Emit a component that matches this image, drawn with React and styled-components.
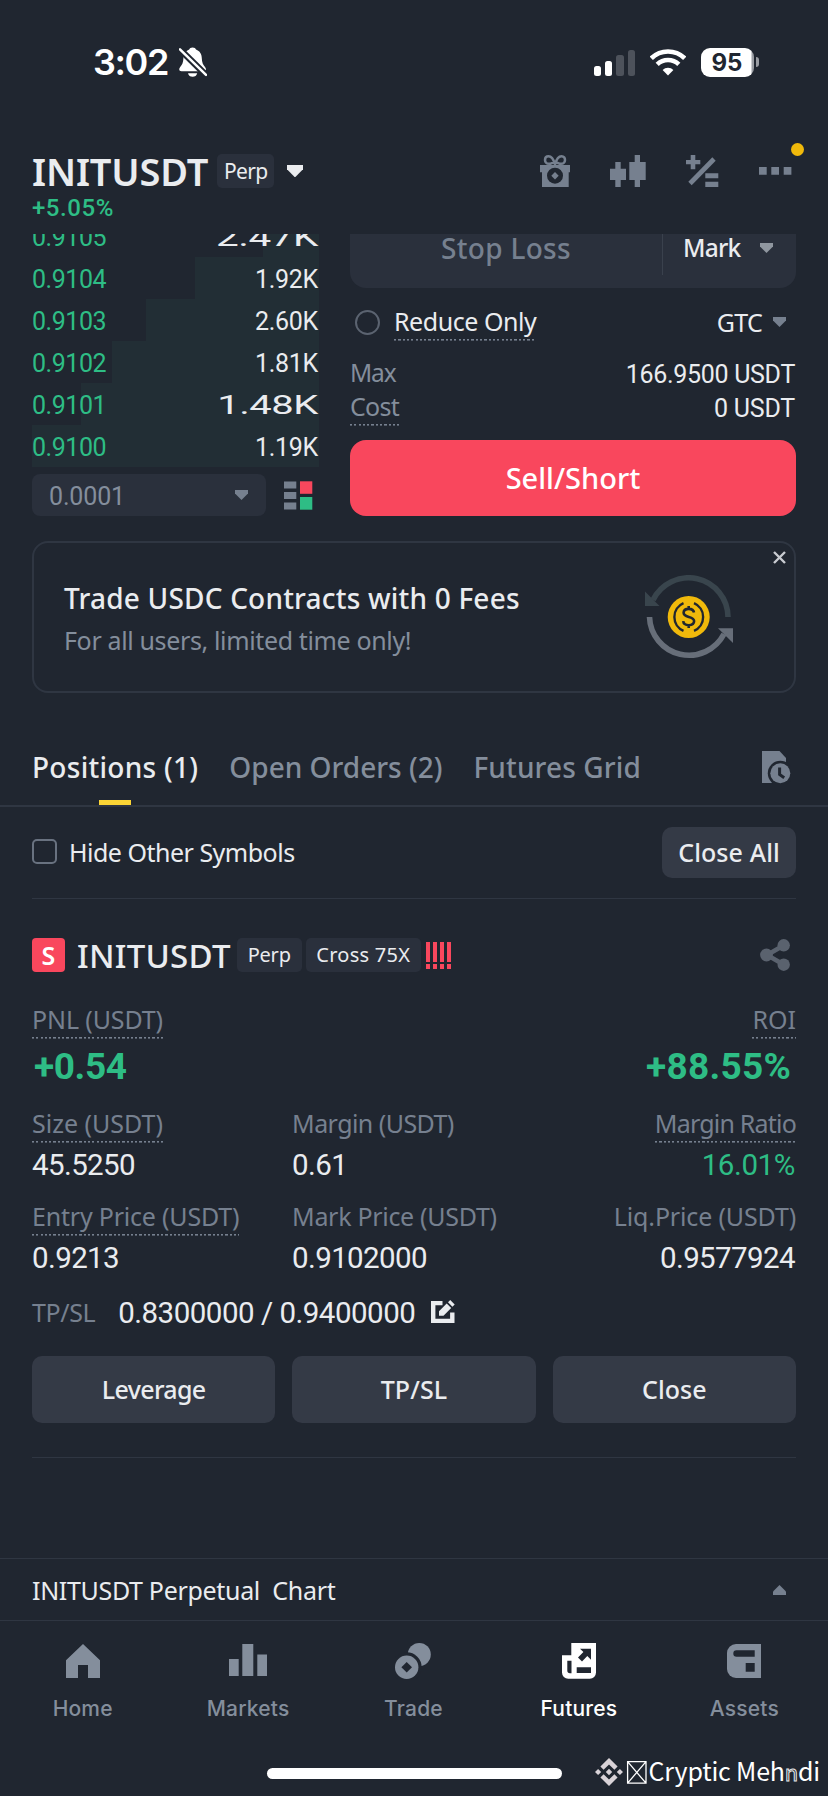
import styled, { createGlobalStyle, css } from 'styled-components';

const colors = {
  bg: '#202630',
  field: '#2a303c',
  button: '#343a46',
  line: '#2f3642',
  text: '#eaecef',
  muted: '#848e9c',
  dim: '#76808f',
  green: '#2ebd85',
  red: '#f9475d',
  yellow: '#fcd535',
  gold: '#f0b90b',
};

const sans = `'Noto Sans', 'Liberation Sans', sans-serif`;
const digits = `Roboto, 'Liberation Sans', sans-serif`;
const system = `Inter, 'Liberation Sans', sans-serif`;

const GlobalStyle = createGlobalStyle`
  * { box-sizing: border-box; }
  body {
    margin: 0;
    background: ${colors.bg};
    color: ${colors.text};
    font-family: ${sans};
  }
  svg { display: block; flex-shrink: 0; }
`;

const Screen = styled.div`
  position: relative;
  width: 828px;
  height: 1796px;
  display: flex;
  flex-direction: column;
  overflow: hidden;
`;

const Text = styled.span`
  font-family: ${(p) => p.$font || sans};
  font-size: ${(p) => p.$size || 25}px;
  font-weight: ${(p) => p.$weight || 400};
  letter-spacing: ${(p) => p.$ls || 0}px;
  color: ${(p) => p.$color || colors.text};
  line-height: ${(p) => p.$lh || 34}px;
  white-space: pre;
`;

const Num = styled(Text).attrs((p) => ({ $font: p.$font || digits }))`
  ${(p) => p.$stretch && css`
    display: inline-block;
    transform: scaleX(${p.$stretch});
    transform-origin: right center;
  `}
`;

/* Roboto sits a touch high next to the labels */
const RowNum = styled(Num)`
  padding-top: 3px;
`;

const Label = styled(Text)`
  line-height: 35px;
  padding-bottom: 2px;
`;

/* Label with a dotted hint line underneath */
const Hint = styled(Label)`
  background: repeating-linear-gradient(90deg, ${colors.dim} 0 2.2px, transparent 2.2px 4.3px) left bottom / 100% 1.6px no-repeat;
`;

/* ---------- status bar ---------- */

const StatusBar = styled.div`
  height: 124px;
  padding: 0 69px 0 93px;
  display: flex;
  align-items: center;
  justify-content: space-between;
`;

const StatusGroup = styled.div`
  display: flex;
  align-items: center;
  gap: ${(p) => p.$gap}px;
`;

const Signal = styled.div`
  display: flex;
  align-items: flex-end;
  gap: 4px;
  height: 27px;
`;

const SignalBar = styled.span`
  width: 7.3px;
  height: ${(p) => p.$h}px;
  border-radius: 2.5px;
  background: ${(p) => (p.$on ? '#fff' : '#4d525b')};
`;

const Battery = styled.div`
  display: flex;
  align-items: center;
  gap: 2px;
`;

const BatteryBody = styled.div`
  width: 53px;
  height: 29px;
  border-radius: 9px;
  background: linear-gradient(90deg, #fff 50px, #9a9da3 51px);
  text-align: center;
  padding-right: 1px;
`;

const BatteryTip = styled.div`
  width: 3px;
  height: 10px;
  border-radius: 0 5px 5px 0;
  background: #9a9da3;
`;

/* ---------- pair header ---------- */

const Header = styled.header`
  height: 110px;
  padding: 24px 36px 0 32px;
  display: flex;
  justify-content: space-between;
`;

const PairRow = styled.div`
  height: 46px;
  display: flex;
  align-items: center;
`;

const Change = styled(Num)`
  display: block;
  line-height: 29px;
`;

const Tag = styled.span`
  height: 34px;
  width: ${(p) => p.$w}px;
  margin-left: ${(p) => p.$ml || 0}px;
  border-radius: 5px;
  background: ${colors.field};
  display: flex;
  align-items: center;
  justify-content: center;
`;

const CaretSlot = styled.span`
  margin-left: ${(p) => p.$ml}px;
`;

const HeaderActions = styled.div`
  height: 46px;
  display: flex;
  align-items: center;
  gap: 40px;
`;

const MoreButton = styled.div`
  position: relative;
`;

const Dot = styled.span`
  position: absolute;
  top: -24px;
  right: -12px;
  width: 13px;
  height: 13px;
  border-radius: 50%;
  background: ${colors.gold};
`;

/* ---------- order book and form ---------- */

const Trade = styled.section`
  height: 307px;
  padding: 0 32px;
  display: flex;
  justify-content: space-between;
  overflow: hidden;
`;

const Book = styled.div`
  width: 287px;
`;

const Levels = styled.div`
  height: 233px;
  overflow: hidden;
  display: flex;
  flex-direction: column;
  justify-content: flex-end;
`;

const Level = styled.div`
  height: 42px;
  flex-shrink: 0;
  display: flex;
  align-items: center;
  justify-content: space-between;
  padding-right: 1px;
  background: linear-gradient(#222e35, #222e35) right / ${(p) => p.$depth}px 100% no-repeat;
`;

const BookFooter = styled.div`
  margin-top: 7px;
  display: flex;
  align-items: center;
`;

const StepSelect = styled.div`
  width: 234px;
  height: 42px;
  padding: 0 18px 0 17px;
  margin-right: 18px;
  border-radius: 8px;
  background: ${colors.field};
  display: flex;
  align-items: center;
  justify-content: space-between;
`;

const Form = styled.div`
  width: 446px;
`;

const StopField = styled.div`
  height: 80px;
  margin-top: -26px;
  border-radius: 16px;
  background: ${colors.field};
  display: flex;
  align-items: center;
`;

const StopInput = styled.div`
  width: 313px;
  height: 54px;
  padding-bottom: 1px;
  display: flex;
  align-items: center;
  justify-content: center;
  border-right: 1px solid #3a414d;
`;

const StopType = styled.div`
  flex: 1;
  padding: 0 23px 0 20px;
  display: flex;
  align-items: center;
  justify-content: space-between;
`;

const OptionRow = styled.div`
  height: 37px;
  margin: 16px 10px 0 5px;
  display: flex;
  align-items: center;
`;

const Radio = styled.span`
  width: 25px;
  height: 25px;
  margin: 0 14px 1px 0;
  border: 2px solid #5b6370;
  border-radius: 50%;
`;

const Tif = styled.div`
  margin-left: auto;
  padding-bottom: 2px;
  display: flex;
  align-items: center;
  gap: 11px;
`;

const AmountRow = styled.div`
  height: 34px;
  display: flex;
  align-items: center;
  justify-content: space-between;
  padding-right: 1px;
`;

const Amounts = styled.div`
  margin-top: 15px;
`;

const SellButton = styled.div`
  height: 76px;
  margin-top: 16px;
  border-radius: 16px;
  background: ${colors.red};
  display: flex;
  align-items: center;
  justify-content: center;
`;

/* ---------- banner ---------- */

const Banner = styled.section`
  position: relative;
  height: 152px;
  margin: 0 32px;
  padding: 0 61px 0 30px;
  border: 2px solid ${colors.line};
  border-radius: 16px;
  display: flex;
  align-items: center;
  justify-content: space-between;
`;

const BannerCopy = styled.div`
  display: flex;
  flex-direction: column;
  padding-top: 4px;
`;

const BannerClose = styled.span`
  position: absolute;
  top: 6px;
  right: 6px;
`;

/* ---------- tabs ---------- */

const Tabs = styled.nav`
  height: 69px;
  margin-top: 45px;
  padding: 0 37px 0 32px;
  border-bottom: 2px solid ${colors.line};
  display: flex;
  align-items: stretch;
  gap: 31px;
`;

const Tab = styled.div`
  display: flex;
  flex-direction: column;
  align-items: center;
  justify-content: space-between;
`;

const TabMark = styled.span`
  width: 32px;
  height: 5px;
  background: ${colors.yellow};
`;

const HistorySlot = styled.div`
  margin-left: auto;
  padding-top: 13px;
`;

/* ---------- positions ---------- */

const FilterRow = styled.div`
  height: 92px;
  margin: 0 32px;
  border-bottom: 1px solid ${colors.line};
  display: flex;
  align-items: center;
  justify-content: space-between;
`;

const HideOthers = styled.div`
  padding-bottom: 2px;
  display: flex;
  align-items: center;
`;

const Checkbox = styled.span`
  width: 25px;
  height: 25px;
  margin-right: 12px;
  border: 2px solid #697280;
  border-radius: 5px;
`;

const Button = styled.div`
  height: ${(p) => p.$h}px;
  width: ${(p) => p.$w}px;
  padding-bottom: 2px;
  border-radius: 10px;
  background: ${colors.button};
  display: flex;
  align-items: center;
  justify-content: center;
`;

const Position = styled.section`
  height: 559px;
  margin: 0 32px;
  padding-top: 39px;
  border-bottom: 1px solid ${colors.line};
`;

const PositionHead = styled.div`
  height: 34px;
  display: flex;
  align-items: center;
`;

const Side = styled.span`
  width: 33px;
  height: 34px;
  margin-right: 12px;
  border-radius: 4px;
  background: ${colors.red};
  display: flex;
  align-items: center;
  justify-content: center;
`;

const Symbol = styled(Text)`
  padding-top: 2px;
`;

const RiskBars = styled.div`
  display: flex;
  gap: 3px;
  margin-left: 5px;
`;

const RiskBar = styled.span`
  width: 4px;
  height: 27px;
  background: linear-gradient(${colors.red} 20px, transparent 20px 22px, ${colors.red} 22px);
`;

const ShareSlot = styled.span`
  margin-left: auto;
  margin-right: 6px;
`;

const Metrics = styled.div`
  display: grid;
  grid-template-columns: 260px 1fr auto;
  margin-top: ${(p) => p.$mt}px;
`;

const Metric = styled.div`
  display: flex;
  flex-direction: column;
  align-items: ${(p) => (p.$end ? 'flex-end' : 'flex-start')};
  gap: ${(p) => p.$gap || 7}px;
`;

const MetricNum = styled(Num)`
  padding-right: 1px;
`;

const Headline = styled(Num)`
  padding: 0 5px 0 2px;
  line-height: 38px;
`;

const TpSlRow = styled.div`
  height: 30px;
  margin-top: 24px;
  display: flex;
  align-items: center;
`;

const TpSlValue = styled(Num)`
  margin: 0 16px 0 23px;
  padding-top: 2px;
`;

const Actions = styled.div`
  margin-top: 29px;
  display: grid;
  grid-template-columns: repeat(3, 1fr);
  gap: 17px;
`;

/* ---------- bottom ---------- */

const ChartBar = styled.div`
  height: 63px;
  margin-top: 100px;
  padding: 0 42px 0 32px;
  border-top: 1px solid ${colors.line};
  border-bottom: 1px solid ${colors.line};
  display: flex;
  align-items: center;
  justify-content: space-between;
`;

const NavBar = styled.nav`
  height: 147px;
  padding: 22px 1px 0 0;
  display: grid;
  grid-template-columns: repeat(5, 1fr);
`;

const NavItem = styled.div`
  display: flex;
  flex-direction: column;
  align-items: center;
  gap: 17px;
`;

const HomeIndicator = styled.div`
  width: 295px;
  height: 11px;
  margin: 0 auto;
  border-radius: 6px;
  background: #fff;
`;

const Watermark = styled.div`
  position: absolute;
  right: 8px;
  bottom: 7px;
  height: 34px;
  display: flex;
  align-items: center;
`;

const MarkText = styled(Text)`
  margin-left: 2px;
  padding-bottom: 4px;
`;

const Ghost = styled.span`
  display: inline-block;
  font-size: 22px;
  color: ${colors.bg};
  -webkit-text-stroke: 1px #e6e7e9;
`;

/* ---------- icons ---------- */

const Caret = ({ w = 13, h = 10, color = colors.dim, up }) => (
  <svg width={w} height={h} viewBox="0 0 13 10" fill={color}>
    <path d={up ? 'M0 10V6.6L6.5 0 13 6.6V10z' : 'M0 0h13v3.4L6.5 10 0 3.4z'} />
  </svg>
);

const BellOff = () => (
  <svg width="28" height="30" viewBox="0 0 28 30">
    <path d="M13.6.4c-1.8 0-3 .9-3.4 2.1C6.3 4 4.5 7.2 4.400 11.2c-.1 4.3-1.3 6.5-3.2 8.7-1.6 1.9-1.3 4.300 1.3 4.300h22.200c2.600 0 2.900-2.400 1.300-4.300-1.900-2.200-3.100-4.400-3.200-8.700C22.700 7.200 20.900 4 17 2.500 16.600 1.300 15.400.4 13.600.4z" fill="#fff" />
    <path d="M9 26.200h9.200c-.5 2.300-2.300 3.600-4.600 3.600S9.500 28.500 9 26.200z" fill="#fff" />
    <path d="M-1 .5L28 29" stroke={colors.bg} strokeWidth="6.500" />
    <path d="M1 2.300L27 27.800" stroke="#fff" strokeWidth="2.500" strokeLinecap="round" />
  </svg>
);

const Wifi = () => (
  <svg width="36" height="27" viewBox="0 0 36 27" fill="none" stroke="#fff">
    <path d="M1.300 9.300a24 24 0 0 1 33.400 0" strokeWidth="4.600" />
    <path d="M7.200 15.300a15.600 15.600 0 0 1 21.600 0" strokeWidth="4.600" />
    <path d="M18 26.500l-5.400-5.400a7.600 7.600 0 0 1 10.800 0z" fill="#fff" stroke="none" />
  </svg>
);

const Gift = () => (
  <svg width="30" height="32" viewBox="0 0 30 32">
    <path d="M0 10h30v7.300h-1.300V32H2V17.300H0z" fill={colors.dim} />
    <path d="M15 9.500C13.500 4 11.500 1.300 8.500 1.300 6 1.300 5 3 5 5s1.500 3.800 4 3.800c2.300 0 3.500-1.600 6-1.600s3.700 1.600 6 1.600c2.500 0 4-1.800 4-3.800s-1-3.700-3.500-3.700C18.500 1.300 16.500 4 15 9.500z" fill="none" stroke={colors.dim} strokeWidth="2.500" />
    <circle cx="15" cy="20.700" r="8" fill={colors.bg} />
    <path d="M15 17l3.700 3.700L15 24.400l-3.700-3.700z" fill={colors.dim} />
  </svg>
);

const Candles = () => (
  <svg width="36" height="32" viewBox="0 0 36 32" fill={colors.dim}>
    <path d="M5.300 7h5.400v6.700H16V25h-5.300v7H5.300v-7H0V13.700h5.300zM24.700 0H30v7h5.700v18H30v7h-5.300v-7h-5.400V7h5.400z" />
  </svg>
);

const Calculator = () => (
  <svg width="33" height="32" viewBox="0 0 33 32" fill={colors.dim}>
    <path d="M4.700 0h4.600v5h5v4.300h-5v5H4.700v-5H0V5h4.700zM19.300 18.200h13v5h-13zM19.300 26.700h13v5.300h-13z" />
    <path d="M4 28.500L28 4" stroke={colors.dim} strokeWidth="4.700" />
  </svg>
);

const More = () => (
  <svg width="33" height="8" viewBox="0 0 33 8" fill={colors.dim}>
    <path d="M0 0h7.700v7.700H0zM12.300 0H20v7.700h-7.700zM24.700 0h7.700v7.700h-7.700z" />
  </svg>
);

const BookLayout = () => (
  <svg width="29" height="29" viewBox="0 0 29 29">
    <path d="M0 .5h12.300v7H0zM0 11h12.300v7H0zM0 21.500h12.300v7H0z" fill={colors.dim} />
    <path d="M16 .3h12.300v12.500H16z" fill={colors.red} />
    <path d="M16 16h12.300v12.700H16z" fill={colors.green} />
  </svg>
);

const Cross = () => (
  <svg width="17" height="17" viewBox="0 0 17 17" stroke="#c8cbd0" strokeWidth="2.400">
    <path d="M3 3l11 11M14 3L3 14" />
  </svg>
);

const UsdcArt = () => (
  <svg width="88" height="84" viewBox="0 0 88 84" fill="none">
    <path d="M83 42A39.500 39.500 0 0 0 8 25" stroke="#39454d" strokeWidth="5.600" />
    <path d="M0 16.500V31h14.500z" fill="#39454d" />
    <path d="M4.500 42A39.500 39.500 0 0 0 79 59" stroke="#676e79" strokeWidth="5.600" />
    <path d="M73 53.200h15V68z" fill="#676e79" />
    <circle cx="43.700" cy="42" r="21" fill={colors.gold} />
    <path d="M38.500 28.200a15 15 0 0 0 0 27.600M49 28.200a15 15 0 0 1 0 27.600" stroke={colors.bg} strokeWidth="2.400" />
    <path d="M49 37.500c-.4-2.500-2.500-3.600-5.200-3.600-3 0-5.200 1.400-5.200 3.900 0 5.600 10.500 2.600 10.500 8.300 0 2.600-2.300 4.100-5.300 4.100-3 0-5.300-1.300-5.600-4M43.700 31v3.500M43.700 49.500V53" stroke={colors.bg} strokeWidth="2.600" />
  </svg>
);

const History = () => (
  <svg width="29" height="33" viewBox="0 0 29 33">
    <path d="M0 0h17.500L24 7v25H0z" fill={colors.dim} />
    <circle cx="18.300" cy="22.300" r="12.500" fill={colors.bg} />
    <circle cx="18.300" cy="22.300" r="10" fill={colors.dim} />
    <path d="M17.600 16.500v7l4.600 3.300" fill="none" stroke={colors.bg} strokeWidth="3" />
  </svg>
);

const Share = () => (
  <svg width="30" height="32" viewBox="0 0 30 32" fill="#5a626e">
    <path d="M23.500 6.500L7 16l16.500 9.500" fill="none" stroke="#5a626e" strokeWidth="4.500" />
    <circle cx="23.700" cy="6.300" r="6.200" />
    <circle cx="23.700" cy="25.700" r="6.200" />
    <circle cx="6.500" cy="16" r="6.400" />
  </svg>
);

const Edit = () => (
  <svg width="24" height="24" viewBox="0 0 24 24" fill={colors.text}>
    <path d="M0 1h11.500v4.200H4.400v13.600h14.700v-6.300h4.400V23H0z" />
    <path d="M8 15.800v-4.600l7.700-7.700 4.500 4.500-7.700 7.800zM17 2.300L19.200 0l4.500 4.500-2.300 2.300z" />
  </svg>
);

const HomeIcon = ({ color }) => (
  <svg width="34" height="36" viewBox="0 0 34 36" fill={color}>
    <path d="M17 1l17 16.300V35H22V22H12v13H0V17.300z" />
  </svg>
);

const MarketsIcon = ({ color }) => (
  <svg width="38" height="36" viewBox="0 0 38 36" fill={color}>
    <path d="M0 16h9.700v17H0zM13.300 1h11v32h-11zM28.300 11.500H38V33h-9.700z" />
  </svg>
);

const TradeIcon = ({ color }) => (
  <svg width="36" height="36" viewBox="0 0 36 36" fill={color}>
    <circle cx="24.300" cy="11.500" r="11.500" />
    <circle cx="11.700" cy="24.300" r="15" fill={colors.bg} />
    <circle cx="11.700" cy="24.300" r="11.700" />
    <path d="M11.700 19l5.300 5.300-5.300 5.300-5.300-5.300z" fill={colors.bg} />
  </svg>
);

const FuturesIcon = ({ color }) => (
  <svg width="34" height="36" viewBox="0 0 34 36">
    <path d="M9.300 0H34v29.500a6.200 6.200 0 0 1-6.200 6.200H6.200A6.200 6.200 0 0 1 0 29.500V12.300h9.300z" fill={color} />
    <path d="M5.300 17.700h4.200v12.600H8a2.700 2.700 0 0 1-2.700-2.700zM14.700 24.300H29V30H14.700zM18 5.700h11v11l-3.700-3.700-5.300 5.400-4-4 5.400-5.300z" fill={colors.bg} />
  </svg>
);

const AssetsIcon = ({ color }) => (
  <svg width="34" height="36" viewBox="0 0 34 36">
    <path d="M9 1h25v34H9a9 9 0 0 1-9-9V10a9 9 0 0 1 9-9z" fill={color} />
    <path d="M9.500 7.300h18.200v6.400H9.500a3.200 3.200 0 0 1 0-6.400zM18.700 20h9v8.700h-9z" fill={colors.bg} />
  </svg>
);

const BinanceLogo = () => (
  <svg width="28" height="28" viewBox="0 0 28 28" fill="#d9d3d8">
    <path d="M14 0l8.600 8.600-3.200 3.200L14 6.400l-5.400 5.400-3.200-3.200zM14 28l8.600-8.600-3.200-3.200-5.400 5.400-5.400-5.400-3.200 3.200zM3.100 10.900L6.200 14l-3.100 3.100L0 14zM24.900 10.900L28 14l-3.100 3.100-3.100-3.100zM14 10.800l3.200 3.200-3.200 3.200-3.200-3.200z" />
  </svg>
);

const MissingGlyph = () => (
  <svg width="24" height="24" viewBox="0 0 24 24" fill="none" stroke="#fff" strokeWidth="1.300">
    <path d="M4.600 1.600h18.400v21.600H4.600zM4.600 1.600L23 23.200M23 1.600L4.600 23.200" />
  </svg>
);

const levels = [
  { price: '0.9105', amount: '2.47K', depth: 56, stretch: 1.62 },
  { price: '0.9104', amount: '1.92K', depth: 124 },
  { price: '0.9103', amount: '2.60K', depth: 173 },
  { price: '0.9102', amount: '1.81K', depth: 207 },
  { price: '0.9101', amount: '1.48K', depth: 238, stretch: 1.6 },
  { price: '0.9100', amount: '1.19K', depth: 287 },
];

const nav = [
  { label: 'Home', Icon: HomeIcon },
  { label: 'Markets', Icon: MarketsIcon },
  { label: 'Trade', Icon: TradeIcon },
  { label: 'Futures', Icon: FuturesIcon, active: true },
  { label: 'Assets', Icon: AssetsIcon },
];

const MetricValue = ({ children, color, ls = -0.6 }) => (
  <MetricNum $size={29.5} $ls={ls} $lh={30} $color={color}>{children}</MetricNum>
);

export default function App() {
  return (
    <Screen>
      <GlobalStyle />

      <StatusBar>
        <StatusGroup $gap={11}>
          <Text $font={system} $size={36} $weight={600} $ls={-1.4} $color="#fff">3:02</Text>
          <BellOff />
        </StatusGroup>
        <StatusGroup $gap={15}>
          <Signal>
            <SignalBar $h={10} $on />
            <SignalBar $h={15} $on />
            <SignalBar $h={21} />
            <SignalBar $h={26} />
          </Signal>
          <Wifi />
          <Battery>
            <BatteryBody>
              <Text $font={system} $size={24} $weight={700} $lh={29} $color={colors.bg}>95</Text>
            </BatteryBody>
            <BatteryTip />
          </Battery>
        </StatusGroup>
      </StatusBar>

      <Header>
        <div>
          <PairRow>
            <Text $size={38} $weight={600} $ls={-0.15} $lh={46}>INITUSDT</Text>
            <Tag $w={57} $ml={9}>
              <Text $size={21} $ls={-0.7}>Perp</Text>
            </Tag>
            <CaretSlot $ml={13}><Caret w={16} h={12.5} color={colors.text} /></CaretSlot>
          </PairRow>
          <Change $size={24} $weight={500} $ls={0.55} $color={colors.green}>+5.05%</Change>
        </div>
        <HeaderActions>
          <Gift />
          <Candles />
          <Calculator />
          <MoreButton>
            <More />
            <Dot />
          </MoreButton>
        </HeaderActions>
      </Header>

      <Trade>
        <Book>
          <Levels>
            {levels.map((l) => (
              <Level key={l.price} $depth={l.depth}>
                <RowNum $ls={-0.45} $color={colors.green}>{l.price}</RowNum>
                <RowNum $ls={-0.3} $stretch={l.stretch}>{l.amount}</RowNum>
              </Level>
            ))}
          </Levels>
          <BookFooter>
            <StepSelect>
              <RowNum $ls={-0.15} $color={colors.muted}>0.0001</RowNum>
              <Caret />
            </StepSelect>
            <BookLayout />
          </BookFooter>
        </Book>

        <Form>
          <StopField>
            <StopInput>
              <Text $size={28} $weight={500} $ls={0.3} $color={colors.dim}>Stop Loss</Text>
            </StopInput>
            <StopType>
              <Text $size={24.5} $weight={500} $ls={-0.8}>Mark</Text>
              <Caret color="#8f969f" />
            </StopType>
          </StopField>
          <OptionRow>
            <Radio />
            <Hint $ls={-0.45}>Reduce Only</Hint>
            <Tif>
              <Text $ls={-0.7}>GTC</Text>
              <Caret />
            </Tif>
          </OptionRow>
          <Amounts>
            <AmountRow>
              <Label $size={24.5} $ls={-1.1} $color={colors.muted}>Max</Label>
              <RowNum $ls={-0.3}>166.9500 USDT</RowNum>
            </AmountRow>
            <AmountRow>
              <Hint $ls={-0.7} $color={colors.muted}>Cost</Hint>
              <RowNum $ls={-0.2}>0 USDT</RowNum>
            </AmountRow>
          </Amounts>
          <SellButton>
            <Text $size={29} $weight={500} $color="#fff">Sell/Short</Text>
          </SellButton>
        </Form>
      </Trade>

      <Banner>
        <BannerCopy>
          <Text $size={28} $weight={500} $ls={0.2} $lh={42}>Trade USDC Contracts with 0 Fees</Text>
          <Text $ls={-0.36} $lh={42} $color={colors.muted}>For all users, limited time only!</Text>
        </BannerCopy>
        <UsdcArt />
        <BannerClose><Cross /></BannerClose>
      </Banner>

      <Tabs>
        <Tab>
          <Text $size={28} $weight={500} $ls={0.28} $lh={58}>Positions (1)</Text>
          <TabMark />
        </Tab>
        <Tab>
          <Text $size={28} $weight={500} $lh={58} $color={colors.muted}>Open Orders (2)</Text>
        </Tab>
        <Tab>
          <Text $size={28} $weight={500} $ls={0.13} $lh={58} $color={colors.muted}>Futures Grid</Text>
        </Tab>
        <HistorySlot><History /></HistorySlot>
      </Tabs>

      <FilterRow>
        <HideOthers>
          <Checkbox />
          <Text $ls={-0.5}>Hide Other Symbols</Text>
        </HideOthers>
        <Button $w={134} $h={51}>
          <Text $weight={500} $ls={0.1}>Close All</Text>
        </Button>
      </FilterRow>

      <Position>
        <PositionHead>
          <Side><Text $size={25} $weight={600} $color="#fff">S</Text></Side>
          <Symbol $size={33} $weight={500} $ls={0.25}>INITUSDT</Symbol>
          <Tag $w={65} $ml={6}><Text $size={20} $ls={-0.2}>Perp</Text></Tag>
          <Tag $w={115} $ml={4}><Text $size={20} $ls={0.25}>Cross 75X</Text></Tag>
          <RiskBars>
            <RiskBar />
            <RiskBar />
            <RiskBar />
            <RiskBar />
          </RiskBars>
          <ShareSlot><Share /></ShareSlot>
        </PositionHead>

        <Metrics $mt={30}>
          <Metric $gap={9}>
            <Hint $ls={-0.12} $color={colors.dim}>PNL (USDT)</Hint>
            <Headline $size={37} $weight={700} $ls={-0.4} $color={colors.green}>+0.54</Headline>
          </Metric>
          <span />
          <Metric $end $gap={9}>
            <Hint $color={colors.dim}>ROI</Hint>
            <Headline $size={37} $weight={700} $ls={0.25} $color={colors.green}>+88.55%</Headline>
          </Metric>
        </Metrics>

        <Metrics $mt={20}>
          <Metric>
            <Hint $color={colors.dim}>Size (USDT)</Hint>
            <MetricValue>45.5250</MetricValue>
          </Metric>
          <Metric>
            <Label $ls={-0.55} $color={colors.dim}>Margin (USDT)</Label>
            <MetricValue>0.61</MetricValue>
          </Metric>
          <Metric $end>
            <Hint $ls={-0.8} $color={colors.dim}>Margin Ratio</Hint>
            <MetricValue ls={-0.4} color={colors.green}>16.01%</MetricValue>
          </Metric>
        </Metrics>

        <Metrics $mt={19}>
          <Metric>
            <Hint $ls={-0.2} $color={colors.dim}>Entry Price (USDT)</Hint>
            <MetricValue>0.9213</MetricValue>
          </Metric>
          <Metric>
            <Label $ls={-0.3} $color={colors.dim}>Mark Price (USDT)</Label>
            <MetricValue>0.9102000</MetricValue>
          </Metric>
          <Metric $end>
            <Label $ls={-0.15} $color={colors.dim}>Liq.Price (USDT)</Label>
            <MetricValue>0.9577924</MetricValue>
          </Metric>
        </Metrics>

        <TpSlRow>
          <Text $ls={-0.4} $color={colors.dim}>TP/SL</Text>
          <TpSlValue $size={29.5} $ls={-0.5} $lh={30}>0.8300000 / 0.9400000</TpSlValue>
          <Edit />
        </TpSlRow>

        <Actions>
          <Button $h={67}><Text $weight={500} $ls={-0.65}>Leverage</Text></Button>
          <Button $h={67}><Text $weight={500} $ls={0.1}>TP/SL</Text></Button>
          <Button $h={67}><Text $weight={500}>Close</Text></Button>
        </Actions>
      </Position>

      <ChartBar>
        <Text $ls={-0.32}>{'INITUSDT Perpetual\u00a0 Chart'}</Text>
        <Caret up />
      </ChartBar>

      <NavBar>
        {nav.map(({ label, Icon, active }) => (
          <NavItem key={label}>
            <Icon color={active ? '#fff' : colors.muted} />
            <Text $font={system} $size={21} $weight={500} $ls={0.2} $lh={26} $color={active ? '#fff' : colors.muted}>{label}</Text>
          </NavItem>
        ))}
      </NavBar>
      <HomeIndicator />

      <Watermark>
        <BinanceLogo />
        <MissingGlyph />
        <MarkText $font={`'Noto Sans CJK SC', sans-serif`} $ls={-0.2} $color="#fff">
          Cryptic Meh<Ghost>n</Ghost>di
        </MarkText>
      </Watermark>
    </Screen>
  );
}
